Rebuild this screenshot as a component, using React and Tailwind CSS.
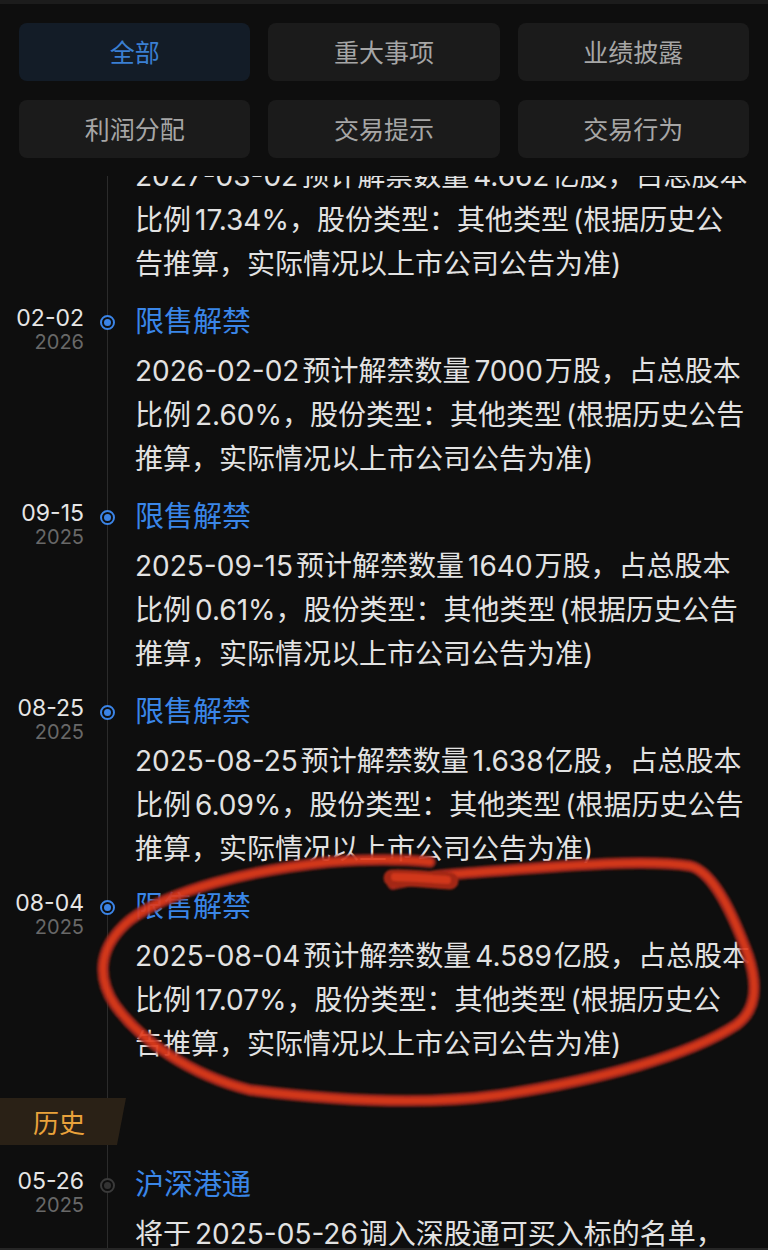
import React from "react";

const CJK = "[font-family:'Noto_Sans_CJK_SC','Noto_Sans',sans-serif]";
const LATIN = "[font-family:'Inter','Noto_Sans_CJK_SC',sans-serif]";

const tabs = [
  { label: "全部", active: true },
  { label: "重大事项" },
  { label: "业绩披露" },
  { label: "利润分配" },
  { label: "交易提示" },
  { label: "交易行为" },
];

const items = [
  {
    date: "03-02",
    year: "2027",
    title: "限售解禁",
    lines: [
      "2027-03-02预计解禁数量4.662亿股，占总股本",
      "比例17.34%，股份类型：其他类型(根据历史公",
      "告推算，实际情况以上市公司公告为准)",
    ],
  },
  {
    date: "02-02",
    year: "2026",
    title: "限售解禁",
    lines: [
      "2026-02-02预计解禁数量7000万股，占总股本",
      "比例2.60%，股份类型：其他类型(根据历史公告",
      "推算，实际情况以上市公司公告为准)",
    ],
  },
  {
    date: "09-15",
    year: "2025",
    title: "限售解禁",
    lines: [
      "2025-09-15预计解禁数量1640万股，占总股本",
      "比例0.61%，股份类型：其他类型(根据历史公告",
      "推算，实际情况以上市公司公告为准)",
    ],
  },
  {
    date: "08-25",
    year: "2025",
    title: "限售解禁",
    lines: [
      "2025-08-25预计解禁数量1.638亿股，占总股本",
      "比例6.09%，股份类型：其他类型(根据历史公告",
      "推算，实际情况以上市公司公告为准)",
    ],
  },
  {
    date: "08-04",
    year: "2025",
    title: "限售解禁",
    lines: [
      "2025-08-04预计解禁数量4.589亿股，占总股本",
      "比例17.07%，股份类型：其他类型(根据历史公",
      "告推算，实际情况以上市公司公告为准)",
    ],
  },
];

function Mixed({ text }) {
  const parts = text.split(/([0-9A-Za-z.\-%()]+)/).filter((p) => p !== "");
  return parts.map((p, i) => {
    if (/^[0-9A-Za-z.\-%()]+$/.test(p)) {
      if (p === "(") {
        return (
          <span key={i} className={`${LATIN} pl-[4px]`}>
            {p}
          </span>
        );
      }
      if (p === ")") {
        return (
          <span key={i} className={LATIN}>
            {p}
          </span>
        );
      }
      if (i === 0) {
        return (
          <span key={i} className={`${LATIN} pr-[3px]`}>
            {p}
          </span>
        );
      }
      const next = parts[i + 1] || "";
      if (next.startsWith("，")) {
        return (
          <span key={i} className={`${LATIN} pl-[4px]`}>
            {p}
          </span>
        );
      }
      return (
        <span key={i} className={`${LATIN} pl-[4px] pr-[2px]`}>
          {p}
        </span>
      );
    }
    return <span key={i}>{p}</span>;
  });
}

function Dot({ past }) {
  if (past) {
    return (
      <div className="mt-[18px] w-[15px] h-[15px] rounded-full border-2 border-[#3a3a3a] bg-[#0e0e0e] flex items-center justify-center">
        <div className="w-[7px] h-[7px] rounded-full bg-[#333333]" />
      </div>
    );
  }
  return (
    <div className="mt-[18px] w-[15px] h-[15px] rounded-full border-2 border-[#3b84e6] bg-[#0e0e0e] flex items-center justify-center">
      <div className="w-[7px] h-[7px] rounded-full bg-[#3b84e6]" />
    </div>
  );
}

function Item({ item, past, className = "" }) {
  return (
    <div className={`flex pb-[13px] ${className}`}>
      <div className={`w-[84px] shrink-0 text-right pt-[8px] ${LATIN}`}>
        <div className="text-[23px] leading-[26px] text-[#e6e6e6]">{item.date}</div>
        <div className="mt-[-2px] text-[20px] leading-[26px] text-[#686868]">{item.year}</div>
      </div>
      <div className="w-[47px] shrink-0 flex justify-center items-start">
        <Dot past={past} />
      </div>
      <div className="ml-[4px] min-w-0">
        <div className="h-[44px] leading-[44px] text-[29px] text-[#3a86e8] whitespace-nowrap">
          {item.title}
        </div>
        <div className="mt-[6px]">
          {item.lines.map((l, i) => (
            <div
              key={i}
              className="h-[44px] leading-[44px] text-[28px] text-[#e2e2e2] whitespace-nowrap"
            >
              <Mixed text={l} />
            </div>
          ))}
        </div>
      </div>
    </div>
  );
}

const CIRCLE =
  "M 393 884 C 410 880, 430 876, 455 874 C 540 868, 640 858, 690 866 C 715 872, 735 920, 748 955 C 758 985, 757 1010, 736 1025 C 690 1055, 600 1080, 500 1095 C 420 1106, 330 1100, 250 1090 C 190 1075, 140 1040, 115 1005 C 95 975, 100 945, 130 920 C 170 890, 250 870, 330 862 C 370 859, 400 859, 430 862";

export default function App() {
  return (
    <div
      className={`relative w-[768px] h-[1250px] overflow-hidden bg-[#0e0e0e] flex flex-col ${CJK}`}
    >
      <div className="h-[4px] bg-[#1c1c1c] shrink-0" />
      <div className="grid grid-cols-3 gap-x-[18px] gap-y-[19px] px-[19px] pt-[19px] pb-[18px] shrink-0">
        {tabs.map((t) => (
          <div
            key={t.label}
            className={`h-[58px] rounded-lg flex items-center justify-center text-[25px] ${
              t.active
                ? "bg-[#131c27] text-[#3a7fd2]"
                : "bg-[#1b1b1b] text-[#a6a6a6]"
            }`}
          >
            {t.label}
          </div>
        ))}
      </div>

      <div className="flex-1 min-h-0 overflow-hidden bg-[linear-gradient(#2b2b2b,#2b2b2b)] bg-no-repeat bg-[length:1px_100%] bg-[position:107px_0]">
        <div className="mt-[-74px]">
          {items.map((it, i) => (
            <Item key={i} item={it} />
          ))}
          <div className="mt-[21px] h-[47px] w-[126px] bg-[#2a2116] [clip-path:polygon(0_0,126px_0,117px_100%,0_100%)] flex items-center pl-[33px] text-[26px] text-[#e9a23b]">
            历史
          </div>
          <Item
            className="mt-[15px]"
            past
            item={{
              date: "05-26",
              year: "2025",
              title: "沪深港通",
              lines: ["将于2025-05-26调入深股通可买入标的名单，"],
            }}
          />
        </div>
      </div>
      <div className="h-[2px] bg-[#262626] shrink-0" />

      <svg
        className="absolute inset-0 pointer-events-none"
        width="768"
        height="1250"
        viewBox="0 0 768 1250"
      >
        <defs>
          <filter id="soft" x="-5%" y="-5%" width="110%" height="110%">
            <feGaussianBlur stdDeviation="0.9" />
          </filter>
        </defs>
        <g filter="url(#soft)" opacity="0.92" fill="none" strokeLinecap="round" strokeLinejoin="round">
          <path d={CIRCLE} stroke="#a2281a" strokeWidth="12" />
          <path d={CIRCLE} stroke="#e23a1e" strokeWidth="6" />
          <path d="M 392 878 C 410 877, 430 880, 450 881" stroke="#b02c18" strokeWidth="17" />
          <path d="M 395 877 C 412 877, 430 879, 447 880" stroke="#e23a1e" strokeWidth="8" />
        </g>
      </svg>
    </div>
  );
}
